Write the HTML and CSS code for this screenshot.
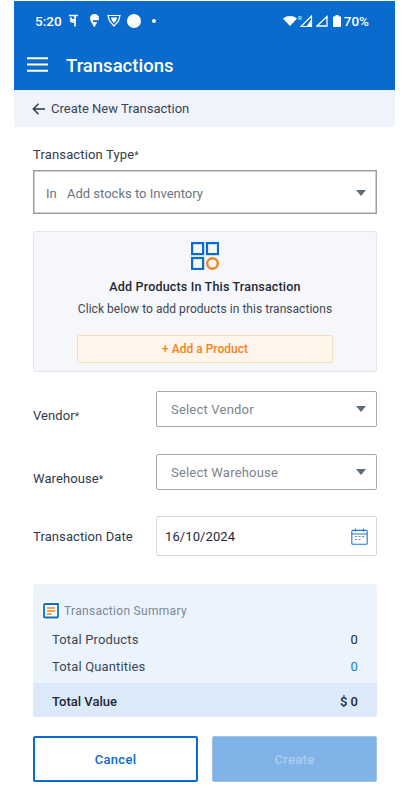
FILE: index.html
```html
<!DOCTYPE html>
<html lang="en">
<head>
    <meta charset="UTF-8">
    <meta name="viewport" content="width=device-width, initial-scale=1.0">
    <title>Transactions</title>
    <link rel="stylesheet" href="styles.css">
</head>
<body>
<div class="app">
    <!-- Blue header with status bar -->
    <header class="topbar">
        <div class="status">
            <div class="status-left">
                <span class="clock">5:20</span>
                <svg class="ic-pe" width="9" height="13" viewBox="0 0 9 13"><path d="M0 1.500h9M6 1.500v11M1.500 3.500c.5 2.500 2 3 4.500 2.500M1 6.500c2 2 3.500 2 5 1.500" fill="none" stroke="#fff" stroke-width="1.700"/></svg>
                <svg class="ic-swiggy" width="9" height="13" viewBox="0 0 9 13"><path d="M4.500 0C2 0 0 1.800 0 4.300c0 2.700 2.500 6 4 8.700l.8-.2c.7-1.500 1.800-3.200 2.400-4.500L3 8V6.300h5.300C8.800 5.500 9 5 9 4.300 9 1.800 7 0 4.500 0z" fill="#fff"/></svg>
                <svg class="ic-shield" width="14" height="13" viewBox="0 0 14 13"><path d="M1 1.500h12L11.500 7 7 12 2.500 7z" fill="none" stroke="#fff" stroke-width="1.200"/><path d="M4 3.500h6l-.8 3L7 9 4.800 6.500z" fill="#fff"/></svg>
                <span class="dot-big"></span>
                <span class="dot-small"></span>
            </div>
            <div class="status-right">
                <svg width="14" height="10" viewBox="0 0 14 10"><path d="M0 2.500C2 .8 4.400 0 7 0s5 .8 7 2.500L7 10z" fill="#fff"/></svg>
                <svg class="ic-signal" width="15" height="13" viewBox="0 0 15 13"><text x="0" y="5.500" class="roam">R</text><path d="M13.500 2v10.500H3z" fill="none" stroke="#fff" stroke-width="1.200"/><path d="M13.500 5v7.500H8.500z" fill="#fff"/></svg>
                <svg class="ic-signal2" width="12" height="12" viewBox="0 0 12 12"><path d="M11 1.500V11H1z" fill="none" stroke="#fff" stroke-width="1.300"/></svg>
                <svg class="ic-batt" width="8" height="12" viewBox="0 0 8 12"><path d="M2.500 0h3v1.200H7a1 1 0 0 1 1 1V11a1 1 0 0 1-1 1H1a1 1 0 0 1-1-1V2.200a1 1 0 0 1 1-1h1.500z" fill="#fff"/></svg>
                <span class="battery">70%</span>
            </div>
        </div>
        <div class="toolbar">
            <svg width="22" height="15" viewBox="0 0 22 15"><path d="M0 1.200h21M0 7.500h21M0 13.800h21" stroke="#fff" stroke-width="2"/></svg>
            <h1>Transactions</h1>
        </div>
    </header>

    <!-- Back row -->
    <div class="subbar">
        <svg width="13" height="12" viewBox="0 0 13 12"><path d="M13 6H1.500M6.500 .8 1.300 6l5.200 5.200" fill="none" stroke="#2b3440" stroke-width="1.400"/></svg>
        <span>Create New Transaction</span>
    </div>

    <main class="content">
        <label class="type-label">Transaction Type<span class="req">*</span></label>
        <div class="select select-type">
            <span class="type-code">In</span>
            <span class="type-text">Add stocks to Inventory</span>
            <span class="caret"></span>
        </div>

        <!-- Add products box -->
        <section class="add-box">
            <svg class="grid-icon" width="28" height="28" viewBox="0 0 28 28">
                <g fill="none" stroke="#0a6ccf" stroke-width="2.200">
                    <rect x="1.100" y="1.100" width="11" height="11"/>
                    <rect x="16" y="1.100" width="11" height="11"/>
                    <rect x="1.100" y="16" width="11" height="11"/>
                </g>
                <circle cx="21.500" cy="21.500" r="5.300" fill="none" stroke="#f58220" stroke-width="2.400"/>
            </svg>
            <h2>Add Products In This Transaction</h2>
            <p>Click below to add products in this transactions</p>
            <button class="add-btn">+ Add a Product</button>
        </section>

        <div class="field field-vendor">
            <label>Vendor<span class="req">*</span></label>
            <div class="select select-small">
                <span class="placeholder">Select Vendor</span>
                <span class="caret"></span>
            </div>
        </div>
        <div class="field field-warehouse">
            <label>Warehouse<span class="req">*</span></label>
            <div class="select select-small">
                <span class="placeholder">Select Warehouse</span>
                <span class="caret"></span>
            </div>
        </div>
        <div class="field field-date">
            <label>Transaction Date</label>
            <div class="date-input">
                <span>16/10/2024</span>
                <svg width="17" height="17" viewBox="0 0 17 17"><g fill="none" stroke="#1a7bd8" stroke-width="1.100"><rect x=".8" y="2.400" width="15.400" height="13.800" rx="1"/><path d="M.8 6h15.400M4.500 .5v3M12.500 .5v3"/></g><path d="M4 8.500h2M7.500 8.500h2M11 8.500h2M4 11.500h2M7.500 11.500h2" stroke="#7a8ca0" stroke-width="1.100"/></svg>
            </div>
        </div>

        <!-- Summary -->
        <section class="summary">
            <div class="summary-head">
                <span class="summary-icon">
                    <svg width="16" height="16" viewBox="0 0 16 16"><path d="M2 1h13v12.500a1 1 0 0 1-1 1H2a1 1 0 0 1-1-1V2a1 1 0 0 1 1-1z" fill="none" stroke="#0a6ccf" stroke-width="1.800"/><path d="M4 5h8M4 8h8M4 11h4.500" stroke="#f58220" stroke-width="1.500"/></svg>
                </span>
                <span>Transaction Summary</span>
            </div>
            <div class="summary-row"><span>Total Products</span><span class="val">0</span></div>
            <div class="summary-row"><span>Total Quantities</span><span class="val val-blue">0</span></div>
            <div class="summary-total"><span>Total Value</span><span>$ 0</span></div>
        </section>

        <div class="actions">
            <button class="btn btn-cancel">Cancel</button>
            <button class="btn btn-create">Create</button>
        </div>
    </main>
</div>
</body>
</html>
```

FILE: styles.css
```css
/* Page */
body {
    margin: 0;
    background-color: #ffffff;
    font-family: Roboto, "Liberation Sans", sans-serif;
    color: #2b3440;
}

.app {
    margin: 0 13px 0 14px;
}

/* Blue header */
.topbar {
    margin-top: 1px;
    height: 89px;
    background-color: #086bcd;
    color: #ffffff;
}

.status {
    height: 39px;
    padding: 0 26px 0 21px;
    display: flex;
    align-items: center;
    justify-content: space-between;
}

.status-left,
.status-right {
    display: flex;
    align-items: center;
}

.clock {
    font-size: 13.5px;
    font-weight: 500;
    margin-right: 7px;
}

.ic-swiggy {
    margin-left: 12px;
}

.ic-shield {
    margin-left: 8px;
}

.dot-big {
    width: 14px;
    height: 14px;
    margin-left: 6px;
    border-radius: 50%;
    background-color: #ffffff;
}

.dot-small {
    width: 4px;
    height: 4px;
    margin-left: 11px;
    border-radius: 50%;
    background-color: #ffffff;
}

.status-right svg {
    margin-right: 1px;
}

.ic-signal2 {
    margin-left: 2px;
}

.ic-batt {
    margin-left: 4px;
}

.roam {
    font-size: 6px;
    fill: #ffffff;
}

.battery {
    margin-left: 2px;
    font-size: 13.5px;
    font-weight: 500;
}

.toolbar {
    display: flex;
    align-items: center;
    height: 50px;
    padding: 0 0 0 13px;
}

.toolbar svg {
    margin-right: 17px;
    margin-top: -1px;
}

.toolbar h1 {
    margin: 0;
    padding-top: 2px;
    font-size: 18.5px;
    font-weight: 500;
}

/* Back row */
.subbar {
    display: flex;
    align-items: center;
    height: 37px;
    padding-left: 18px;
    background-color: #eff3fb;
    font-size: 13px;
    color: #3a4452;
}

.subbar svg {
    margin-right: 6px;
}

/* Form */
.content {
    padding: 0 18px 0 19px;
}

.type-label {
    display: block;
    margin-top: 20px;
    height: 16px;
    line-height: 16px;
    font-size: 13px;
    letter-spacing: .15px;
    color: #2f3b4a;
}

.req {
    font-size: 10px;
}

.select {
    display: flex;
    align-items: center;
    background-color: #ffffff;
    font-size: 13px;
    color: #6b7480;
}

.select-type {
    height: 44px;
    margin-top: 7px;
    padding: 2px 10px 0 12px;
    border: 1px solid #9b9fa4;
    box-shadow: inset 0 0 0 .5px #9b9fa4;
    box-sizing: border-box;
}

.type-code {
    width: 21px;
}

.type-text {
    flex: 1;
}

.caret {
    width: 0;
    height: 0;
    border-left: 5.500px solid transparent;
    border-right: 5.500px solid transparent;
    border-top: 6px solid #5f6b78;
}

.add-box {
    box-sizing: border-box;
    height: 141px;
    margin-top: 17px;
    padding-top: 10px;
    border: 1px solid #e2e6ec;
    border-radius: 3px;
    background-color: #f5f7fb;
    text-align: center;
}

.grid-icon {
    display: block;
    margin: 0 auto;
}

.add-box h2 {
    margin: 9px 0 0;
    font-size: 12.500px;
    line-height: 16px;
    font-weight: 500;
    letter-spacing: .18px;
    color: #1d2836;
}

.add-box p {
    margin: 6px 0 0;
    font-size: 12px;
    line-height: 16px;
    letter-spacing: .04px;
    color: #3d4754;
}

.add-btn {
    display: block;
    width: 256px;
    height: 28px;
    margin: 18px auto 0;
    padding: 0;
    border: 1px solid #fbdcb8;
    border-radius: 2px;
    background-color: #fff5eb;
    font-family: inherit;
    font-size: 12px;
    font-weight: 500;
    color: #f58220;
}

.field {
    display: flex;
    align-items: center;
    justify-content: space-between;
    font-size: 13px;
    letter-spacing: .1px;
    color: #2f3b4a;
}

.field label {
    padding-top: 12px;
}

.field-vendor {
    margin-top: 19px;
}

.field-warehouse {
    margin-top: 27px;
}

.field-date {
    margin-top: 26px;
}

.field-date label {
    padding-top: 1px;
}

.select-small {
    box-sizing: border-box;
    width: 221px;
    height: 36px;
    padding: 0 10px 0 14px;
    border: 1px solid #a3a9b0;
    border-radius: 2px;
    justify-content: space-between;
    letter-spacing: .2px;
    color: #7b838c;
}

.date-input {
    box-sizing: border-box;
    width: 221px;
    height: 40px;
    padding: 0 8px 0 8px;
    border: 1px solid #d3d7dc;
    border-radius: 2px;
    display: flex;
    align-items: center;
    justify-content: space-between;
    color: #1d2a3a;
}

/* Summary */
.summary {
    margin-top: 28px;
    height: 133px;
    border-radius: 3px;
    background-color: #ebf3fc;
    overflow: hidden;
}

.summary-head {
    display: flex;
    align-items: center;
    height: 18px;
    margin-top: 0;
    padding: 18px 0 0 9px;
    font-size: 12px;
    letter-spacing: .3px;
    color: #7c8794;
}

.summary-icon {
    display: flex;
    align-items: center;
    justify-content: center;
    width: 18px;
    height: 18px;
    margin-right: 4px;
    background-color: #ffffff;
}

.summary-row {
    display: flex;
    justify-content: space-between;
    height: 27px;
    line-height: 27px;
    padding: 0 19px;
    font-size: 13px;
    letter-spacing: .15px;
    color: #3d4754;
}

.summary-head + .summary-row {
    margin-top: 6px;
}

.val {
    color: #1d2836;
}

.val-blue {
    color: #1a7bd8;
}

.summary-total {
    box-sizing: border-box;
    display: flex;
    justify-content: space-between;
    align-items: center;
    height: 34px;
    margin-top: 3px;
    padding: 2px 19px 0;
    background-color: #dbe9f9;
    font-size: 13px;
    font-weight: 500;
    color: #1d2836;
}

/* Buttons */
.actions {
    display: flex;
    justify-content: space-between;
    margin-top: 19px;
}

.btn {
    box-sizing: border-box;
    width: 165px;
    height: 46px;
    padding: 0;
    border-radius: 2px;
    font-family: inherit;
    font-size: 13px;
    font-weight: 500;
    letter-spacing: .3px;
}

.btn-cancel {
    border: 2px solid #086bcd;
    background-color: #ffffff;
    color: #086bcd;
}

.btn-create {
    border: 1px solid #9cc3ec;
    background-color: #80b4e6;
    color: #a9cdf0;
}
```
